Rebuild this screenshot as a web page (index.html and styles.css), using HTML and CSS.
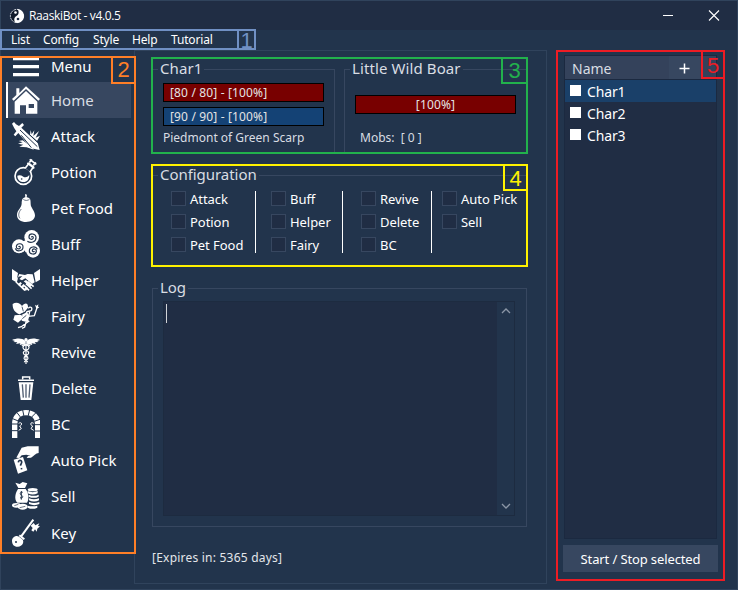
FILE: index.html
```html
<!DOCTYPE html>
<html lang="en">
<head>
<meta charset="utf-8">
<title>RaaskiBot - v4.0.5</title>
<link rel="stylesheet" href="styles.css">
</head>
<body>
<div class="window">
  <header class="titlebar">
    <svg class="logo" viewBox="0 0 16 16"><circle cx="8" cy="8" r="6.6" fill="#111b2b" stroke="#dfe3e8" stroke-dasharray="2 .8"/><path d="M8 1a7 7 0 0 1 0 14c-3 0-4-5.500-.5-7C10.500 6.500 10 2 8 1z" fill="#fff"/><circle cx="6.500" cy="4.500" r="1.300" fill="#fff"/><circle cx="9" cy="11" r="1.300" fill="#202d44"/></svg>
    <span class="title">RaaskiBot - v4.0.5</span>
    <svg class="controls" viewBox="0 0 60 12"><path d="M2 6.500h10M48 1.500l10 10M58 1.500l-10 10" stroke="#fff" stroke-width="1.100" fill="none"/></svg>
  </header>
  <nav class="menubar"><span class="m1">List</span><span class="m2">Config</span><span class="m3">Style</span><span class="m4">Help</span><span>Tutorial</span></nav>
  <div class="content">
    <aside class="sidebar">
      <div class="item menu"><svg viewBox="0 0 84 84"><path d="M3 20h78M3 44h78M3 68h78" stroke="#fff" stroke-width="10"/></svg><span>Menu</span></div>
      <div class="item active"><svg viewBox="0 0 84 84"><path class="f" d="M13 7h9v14L42 1l42 38-5 5-37-35L5 44l-5-5 13-12z"/><path class="f" fill-rule="evenodd" d="M8 47l34-32 34 32v36H42V58H24v25H8zM50 54v12h16V54z"/></svg><span>Home</span></div>
      <div class="item"><svg viewBox="0 0 84 84"><path class="f" d="M0 5l6-5 6 7 9 5 10-9 5 6-8 8 49 45 6 22-26-5-38-46-9 10-5-5 8-10-6-9z"/><path d="M24 24l52 50" stroke="#22344c" stroke-width="3"/><path class="f" d="M54 38l2-14 3 13 8-12-3 17 17-15-10 20 13-6-9 16zM32 55l-12 2 12 4-14 4 16 3-12 6 22 2 22 7-10-10z"/><path d="M40 26l38 36M28 40l30 37" stroke="#22344c" stroke-width="3"/></svg><span>Attack</span></div>
      <div class="item"><svg viewBox="0 0 84 84"><circle class="s" cx="34" cy="54" r="25" stroke-width="5"/><path d="M40 30l11-14 13 11-10 15" fill="#22344c" stroke="#fff" stroke-width="5"/><path class="s" d="M46 15l21 16M53 4l20 15" stroke-width="5"/><path class="f" d="M58 3l4 3-8 9-4-3zM69 11l4 3-7 10-4-3zM16 53q9-3 18 3t18-5c0 14-7 21-17 21-11 0-19-7-19-19z"/><circle cx="29" cy="63" r="2.500" fill="#22344c"/></svg><span>Potion</span></div>
      <div class="item"><svg viewBox="0 0 84 84"><path class="f" d="M39 0l6 2-1 8c12 1 12 9 12 20 0 12 13 20 13 34 0 13-12 20-27 20S15 77 15 63c0-15 13-21 14-34 0-10 2-18 11-19z"/><path d="M28 45c-9 10-10 21-4 28M34 16c5 5 15 4 19-1" stroke="#22344c" stroke-width="2" fill="none"/></svg><span>Pet Food</span></div>
      <div class="item"><svg viewBox="0 0 84 84"><g class="f"><circle cx="59" cy="22" r="22"/><circle cx="21" cy="49" r="21"/><circle cx="63" cy="62" r="21"/><path d="M43 31h28l3 28-33 8-20-30z"/></g><g fill="none" stroke="#22344c" stroke-width="3.500"><path d="M46 34c13 8 27 0 26-13-2-12-20-12-21-1-1 9 12 11 13 3 0-4-5-5-6-1M10 55c4 12 23 9 23-4 1-12-18-13-20-2-1 8 9 10 12 4 1-4-4-5-5-2M76 58c-5-12-24-8-24 5 0 11 19 13 21 1 1-8-11-10-12-3-1 4 5 6 6 2"/></g></svg><span>Buff</span></div>
      <div class="item"><svg viewBox="0 0 84 84"><path class="f" d="M0 9l18 12-5 28L0 41zM84 9L66 21l5 28 13-8zM22 24l17 3 8-3 15 1 6 24-8 5-20-17-10 6-8-4 9-9-12 2-4 16 28 24-6 3-21-20-6-6z"/><path class="f" d="M35 46l7-4 18 15-5 6zM18 55l7-7 5 4-8 9zM27 62l7-8 5 4-8 10zM37 69l6-7 5 4-6 8z"/><path class="s" d="M47 47l18 15M42 53l17 15M37 59l14 14" stroke-width="5"/></svg><span>Helper</span></div>
      <div class="item"><svg viewBox="0 0 84 84"><path class="f" d="M2 6C13-2 25 4 30 12 37 2 49 0 48 17L38 29 23 37C8 33 1 20 2 6zM28 38L8 40l-4 13 14 9 15-13z"/><path class="s" d="M49 19c6-9 15 0 8 7l-12 3-9 20 14 9-22 16-10 3M53 29l-3 14 17-2 10-30M42 60l-4 15-8 4" stroke-width="4"/><path class="f" d="M69 8l5 3 5-4-1 7 4 3-6 2-2 4-2-6zM31 37l14-6 7 10-5 20-18-5z"/><path d="M30 14l4 14M24 38l14-6M31 50l12-10" stroke="#22344c" stroke-width="2.500"/></svg><span>Fairy</span></div>
      <div class="item"><svg viewBox="0 0 84 84"><path class="f" d="M40 9C30-1 13 1 0 6l9 3-5 3 12 1-4 5 13-2-2 5 17-4zM44 9C54-1 71 1 84 6l-9 3 5 3-12 1 4 5-13-2 2 5-17-4z"/><circle class="f" cx="42" cy="5" r="5"/><path class="s" d="M42 8v70M30 24c2-8 22-4 21 5 0 9-18 7-17 16 0 8 15 8 14 16 0 6-11 6-11 12M54 24c-2-8-22-4-21 5 0 9 18 7 17 16 0 8-15 8-14 16 0 6 11 6 11 12" stroke-width="3.500"/></svg><span>Revive</span></div>
      <div class="item"><svg viewBox="0 0 84 84"><path d="M32 16V9h21v7M18 19h48" class="s" stroke-width="4.500"/><path class="f" d="M20 25h44l-6 53H26z"/><path d="M31 31l3 40M42 31v40M54 31l-3 40" stroke="#536074" stroke-width="4"/></svg><span>Delete</span></div>
      <div class="item"><svg viewBox="0 0 84 84"><path d="M8 84V42C8 20 22 8 42 8s35 12 35 34v42" fill="none" stroke="#fff" stroke-width="16"/><path d="M0 62h18M0 42h19M2 26l17 7M15 8l11 14M32 0l4 19M53 0l-5 19M71 9L58 22M84 28l-17 6M66 44h18M66 63h18" stroke="#22344c" stroke-width="3"/><path class="s" d="M20 40c12-7 10 8 3 8l5 8-8 5M65 40c-12-7-10 8-3 8l-5 8 8 5" stroke-width="3"/></svg><span>BC</span></div>
      <div class="item"><svg viewBox="0 0 84 84"><path class="f" d="M80 1v20c-9 1-14 8-23 14l-13 1 4-6 8-1-13-3-14 2-7 8-9-1L29 5 47 1z"/><path class="f" d="M5 41l28-8 13 40-28 10z"/><path d="M19 49c1-10 14-6 9 3l-3 7M28 66l1 4" stroke="#22344c" stroke-width="5" fill="none"/></svg><span>Auto Pick</span></div>
      <div class="item"><svg viewBox="0 0 84 84"><path class="f" d="M10 2l13 4 9-6 14 4-7 14H19zM18 21h23c8 10 12 31 4 41H16C5 51 11 31 18 21z"/><path d="M32 31c-8-3-10 6-3 9 6 3 3 11-5 7M28 27v26" stroke="#22344c" stroke-width="3" fill="none"/><g class="f"><ellipse cx="62" cy="23" rx="15" ry="5"/><path d="M47 27q15 7 30 0v7q-15 7-30 0zM50 38q15 7 30 0v6q-15 7-30 0zM51 49q15 6 30 0v6q-15 7-30 0zM51 60q15 6 31 0v6q-15 7-31 0zM47 71q15 4 29 0v6q-15 7-29 0z"/><ellipse cx="13" cy="70" rx="13" ry="7"/><ellipse cx="32" cy="74" rx="15" ry="9"/></g><path d="M7 71l12-4M23 77l17-4" stroke="#22344c" stroke-width="2"/></svg><span>Sell</span></div>
      <div class="item key"><svg viewBox="0 0 84 84"><path d="M27 53L64 2" class="s" stroke-width="6"/><path class="f" d="M56 20l9-8 5 7 12-6-4 8 6 1-8 7-2 9-5-7-5 7-6-4 4-7zM0 65c0-10 12-18 21-12l10 8c7 8 0 22-13 22C7 84 0 77 0 65z"/><path d="M22 49l15 12" stroke="#fff" stroke-width="6"/><circle cx="12" cy="69" r="3" fill="#22344c"/></svg><span>Key</span></div>
    </aside>
    <main class="panel">
      <div class="status">
        <section class="group"><h2>Char1</h2>
          <div class="bar hp">[80 / 80] - [100%]</div>
          <div class="bar mp">[90 / 90] - [100%]</div>
          <p class="place">Piedmont of Green Scarp</p>
        </section>
        <section class="group target"><h2>Little Wild Boar</h2>
          <div class="bar hp">[100%]</div>
          <p class="mobs">Mobs:&nbsp; [ 0 ]</p>
        </section>
      </div>
      <section class="group config"><h2>Configuration</h2>
        <div class="checks">
          <div class="col"><label><i></i>Attack</label><label><i></i>Potion</label><label><i></i>Pet Food</label></div>
          <div class="col"><label><i></i>Buff</label><label><i></i>Helper</label><label><i></i>Fairy</label></div>
          <div class="col"><label><i></i>Revive</label><label><i></i>Delete</label><label><i></i>BC</label></div>
          <div class="col"><label><i></i>Auto Pick</label><label><i></i>Sell</label></div>
        </div>
      </section>
      <section class="group log"><h2>Log</h2>
        <div class="textarea"><span class="caret"></span>
          <div class="scroll"><svg viewBox="0 0 10 6"><path d="M1 5l4-4 4 4"/></svg><svg viewBox="0 0 10 6"><path d="M1 1l4 4 4-4"/></svg></div>
        </div>
      </section>
      <p class="expires">[Expires in: 5365 days]</p>
    </main>
    <aside class="chars">
      <div class="list">
        <div class="head"><span class="name">Name</span><span class="plus"><svg viewBox="0 0 11 11"><path d="M5.500 .5v10M.5 5.500h10" stroke="#fff" stroke-width="1.500"/></svg></span></div>
        <div class="row selected"><i></i><span>Char1</span></div>
        <div class="row"><i></i><span>Char2</span></div>
        <div class="row"><i></i><span>Char3</span></div>
      </div>
      <button>Start / Stop selected</button>
    </aside>
  </div>
  <div class="mark a1"><b>1</b></div>
  <div class="mark a2"><b>2</b></div>
  <div class="mark a3"><b>3</b></div>
  <div class="mark a4"><b>4</b></div>
  <div class="mark a5"><b>5</b></div>
</div>
</body>
</html>
```
FILE: styles.css
```css
* { box-sizing: border-box; }
body { margin: 0; background: #22344c; }
h2, p { margin: 0; font-weight: normal; }
.window {
  position: relative; width: 738px; height: 590px;
  display: flex; flex-direction: column;
  border: 1px solid #30435c; background: #22344c; color: #fff;
  font: 13px/18px "Noto Sans", sans-serif;
}
.titlebar { height: 29px; display: flex; align-items: center; background: #202d44; padding: 0 16px 0 8px; flex: none; }
.logo { width: 16px; height: 16px; }
.title { margin-left: 4px; font: 12px/18px "Open Sans", sans-serif; letter-spacing: -.36px; }
.controls { width: 60px; height: 12px; margin: -2px 0 0 auto; }
.menubar { height: 20px; flex: none; padding-left: 10px; display: flex; font: 12px/20px "Noto Sans", sans-serif; letter-spacing: -.15px; }
.m1 { width: 32px; }
.m2 { width: 50px; }
.m3 { width: 39px; }
.m4 { width: 39px; }
.content { flex: 1; display: flex; min-height: 0; }
.sidebar { width: 133px; flex: none; padding: 0 3px 0 5px; }
.item { height: 36px; display: flex; align-items: center; padding-left: 6px; font-size: 15px; }
.item svg { width: 28px; height: 28px; margin-right: 11px; flex: none; }
.item.menu { height: 32px; }
.item.key { margin-top: 1px; }
.item.active { background: #374760; border-left: 2px solid #fff; padding-left: 4px; color: #d9dde3; }
.f { fill: #fff; }
.s { fill: none; stroke: #fff; }
.panel { width: 413px; height: 534px; flex: none; border: 1px solid #30435c; padding: 18px 0 0 17px; }
.group { border: 1px solid #374760; width: 375px; }
.group h2 { width: max-content; height: 20px; margin: -12px 0 1px 5px; padding: 0 2px; background: #22344c; color: #d9dde3; font-size: 15px; line-height: 20px; letter-spacing: -.05px; }
.status { display: flex; gap: 9px; }
.status .group { width: 183px; height: 85px; padding: 0 10px; }
.status .group h2 { margin-left: -5px; letter-spacing: .1px; }
.bar { height: 19px; border: 1px solid #000; margin-top: 5px; padding-left: 6px; line-height: 17px; font-size: 12px; letter-spacing: .15px; color: #e4e4e4; }
.hp { background: #780000; }
.mp { background: #144275; }
.place { font-size: 12px; margin-top: 3px; color: #d9dde3; }
.target .bar { margin-top: 17px; padding: 0; text-align: center; }
.mobs { font-size: 12px; margin: 15px 0 0 5px; color: #d9dde3; }
.config { margin-top: 21px; height: 91px; }
.checks { display: flex; padding: 6px 0 0 18px; }
.col { height: 62px; display: flex; flex-direction: column; gap: 8px; border-right: 1px solid #fff; margin-right: 15px; }
.col:nth-child(1) { width: 85px; }
.col:nth-child(2) { width: 72px; margin-right: 18px; }
.col:nth-child(3) { width: 71px; margin-right: 10px; }
.col:nth-child(4) { border: 0; margin: 0; }
.col label { height: 15px; display: flex; align-items: center; gap: 4px; white-space: nowrap; letter-spacing: -.05px; }
.col i { width: 15px; height: 15px; background: #202d44; border: 1px solid #374760; flex: none; }
.log { margin-top: 22px; height: 239px; }
.textarea { width: 352px; height: 215px; margin: 4px 0 0 10px; display: flex; justify-content: space-between; border: 1px solid #1d2b40; background: #202d44; }
.caret { width: 1px; height: 19px; margin: 2px 0 0 2px; background: #d0d4d8; }
.scroll { width: 17px; background: #22344c; display: flex; flex-direction: column; justify-content: space-between; align-items: center; padding: 6px 0; }
.scroll svg { width: 10px; height: 6px; fill: none; stroke: #8b96a6; stroke-width: 1.3; }
.expires { margin-top: 22px; font-size: 12px; letter-spacing: .22px; color: #e4e6ea; }
.chars { padding: 5px 0 0 16px; width: 172px; }
.list { width: 153px; height: 484px; margin-left: 1px; border: 1px solid #1b2940; background: #202d44; }
.head { height: 24px; display: flex; background: #34425b; border-bottom: 1px solid #1b2940; color: #d9dde3; }
.name { width: 104px; padding: 4px 0 0 7px; font-size: 14px; }
.plus { width: 31px; background: #374760; display: flex; align-items: center; justify-content: center; padding-top: 2px; }
.plus svg { width: 11px; height: 11px; }
.row { height: 22px; display: flex; align-items: center; gap: 6px; padding-left: 5px; font: 14px/22px "Noto Sans", sans-serif; letter-spacing: -.15px; }
.row span { padding-top: 2px; }
.row i { width: 11px; height: 11px; margin-bottom: 1px; background: #fff; }
.selected { background: #1a4069; }
button { width: 155px; height: 27px; margin-top: 6px; padding: 1px 0 0; border: 0; background: #374760; color: #fff; font: 13px/26px "Noto Sans", sans-serif; letter-spacing: -.12px; }
.mark { position: absolute; border: 2px solid; }
.mark b { position: absolute; top: -2px; right: -2px; border: 2px solid; text-align: center; font: 22px/24px "Liberation Sans", sans-serif; }
.a1 { left: -1px; top: 28px; width: 257px; height: 21px; color: #7090c4; }
.a1 b { width: 19px; height: 21px; line-height: 19px; }
.a2 { left: -1px; top: 55px; width: 137px; height: 499px; color: #ff7f27; }
.a2 b { width: 26px; height: 28px; }
.a3 { left: 150px; top: 56px; width: 378px; height: 98px; color: #22b14c; }
.a3 b { width: 28px; height: 28px; }
.a4 { left: 150px; top: 163px; width: 378px; height: 104px; color: #fff200; }
.a4 b { width: 26px; height: 28px; line-height: 26px; }
.a5 { left: 555px; top: 49px; width: 170px; height: 532px; color: #ed1c24; }
.a5 b { width: 25px; height: 30px; line-height: 27px; }
.a1, .a2, .a3, .a4, .a5 { margin: 0; }
.a1 { width: 256px; }
.a2 { width: 136px; height: 498px; }
.a2 b { width: 25px; }
.a3 { width: 377px; height: 97px; }
.a3 b { width: 27px; height: 27px; }
.a4 { width: 377px; height: 103px; }
.a4 b { width: 25px; height: 27px; }
.a5 { width: 169px; height: 531px; }
.a5 b { width: 24px; height: 29px; }
```
